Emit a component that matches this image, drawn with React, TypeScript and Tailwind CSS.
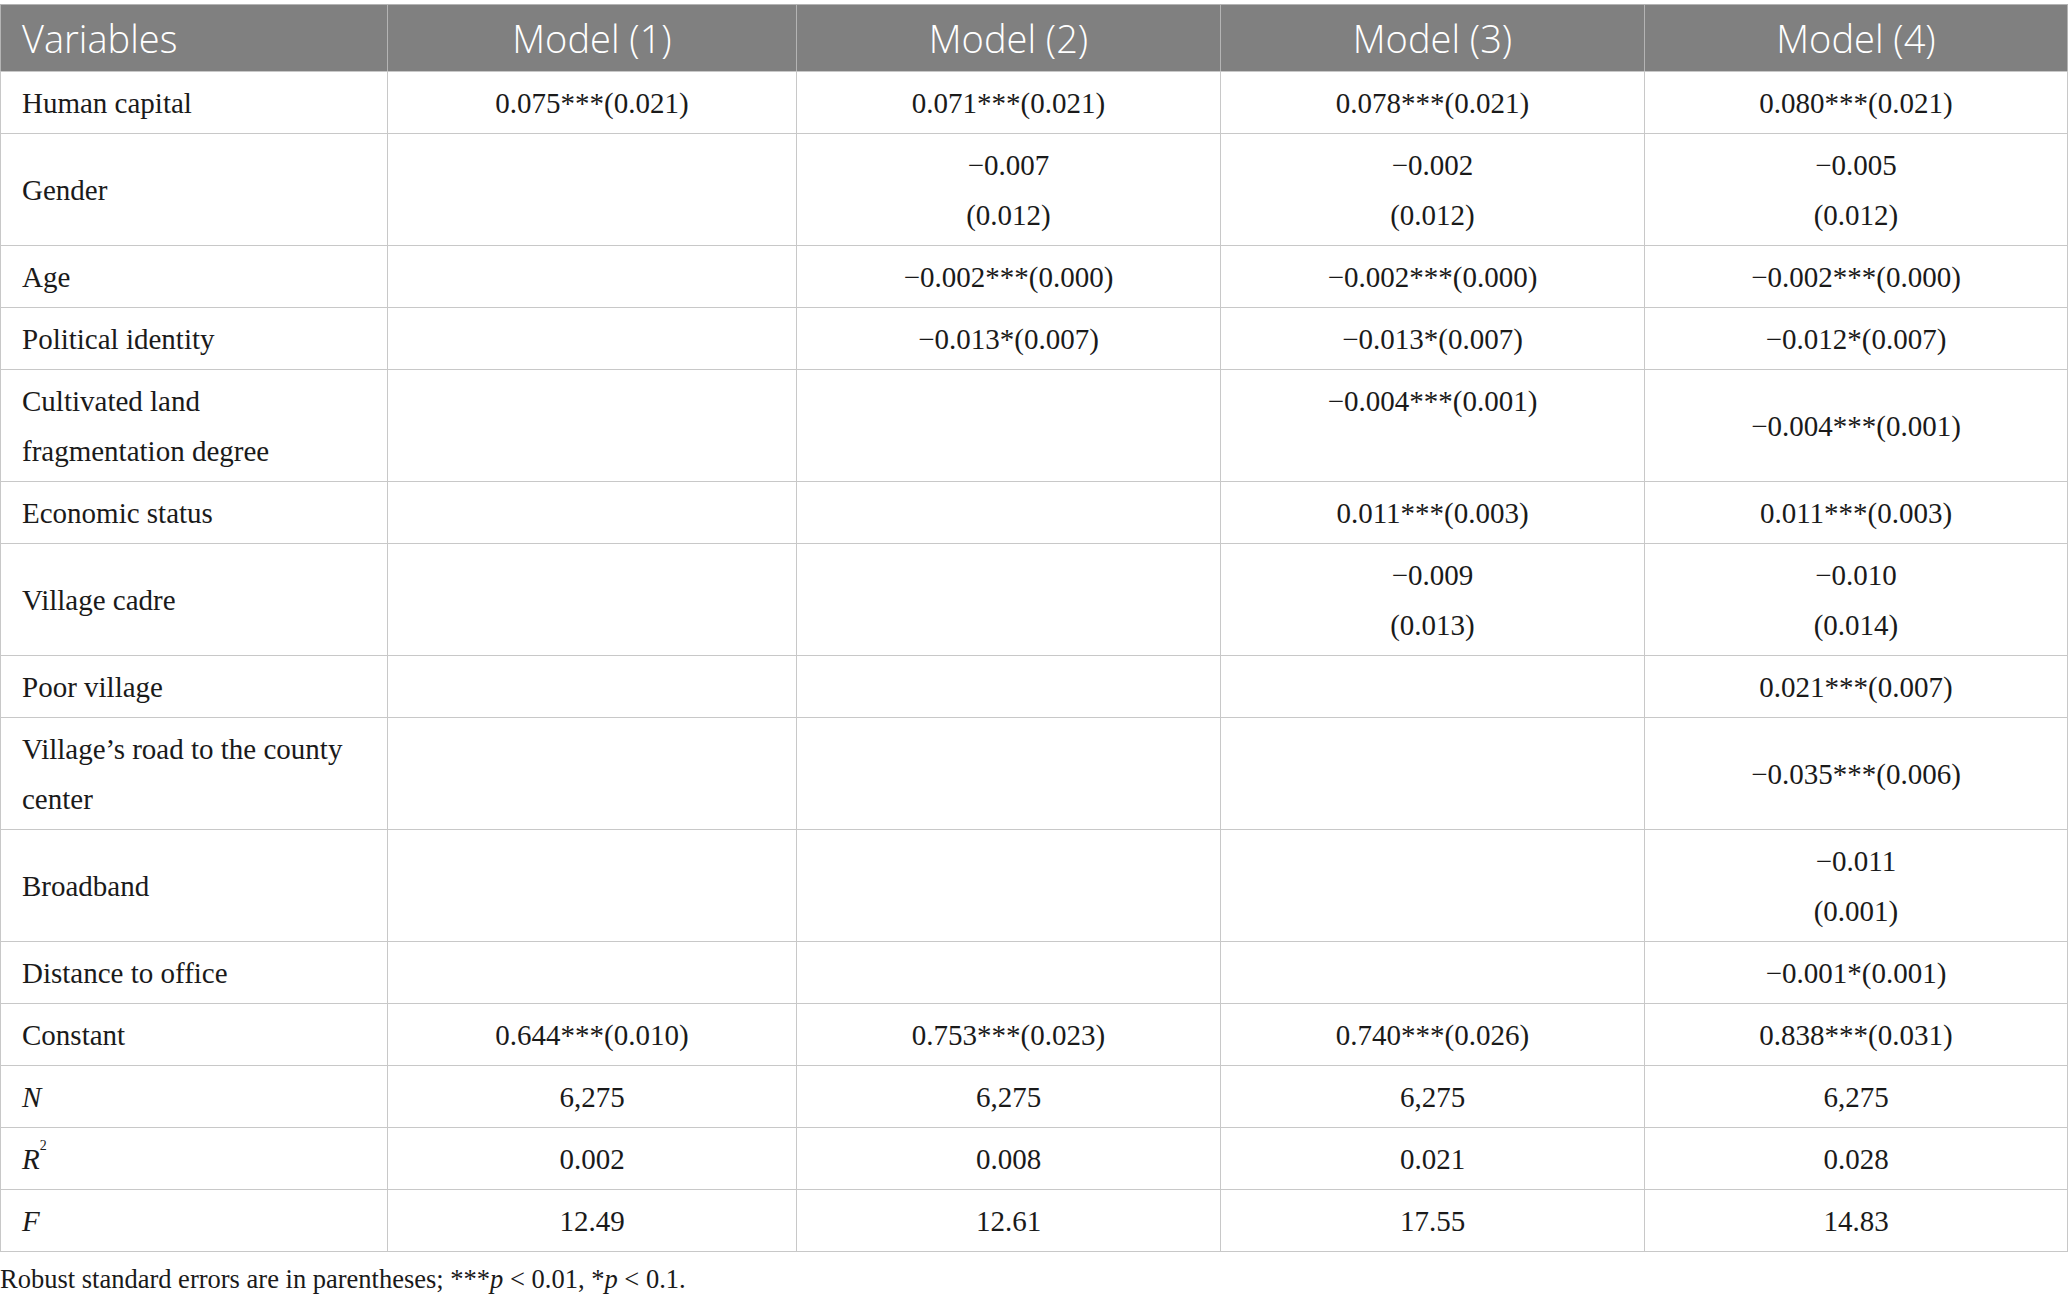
const models = ["Model (1)", "Model (2)", "Model (3)", "Model (4)"];

type Row = {
  label: React.ReactNode;
  cells: string[][];
};

const M = "\u2212";

const rows: Row[] = [
  {
    label: "Human capital",
    cells: [["0.075***(0.021)"], ["0.071***(0.021)"], ["0.078***(0.021)"], ["0.080***(0.021)"]],
  },
  {
    label: "Gender",
    cells: [[], [M + "0.007", "(0.012)"], [M + "0.002", "(0.012)"], [M + "0.005", "(0.012)"]],
  },
  {
    label: "Age",
    cells: [[], [M + "0.002***(0.000)"], [M + "0.002***(0.000)"], [M + "0.002***(0.000)"]],
  },
  {
    label: "Political identity",
    cells: [[], [M + "0.013*(0.007)"], [M + "0.013*(0.007)"], [M + "0.012*(0.007)"]],
  },
  {
    label: (
      <>
        Cultivated land
        <br />
        fragmentation degree
      </>
    ),
    cells: [[], [], [M + "0.004***(0.001)", "\u00a0"], [M + "0.004***(0.001)"]],
  },
  {
    label: "Economic status",
    cells: [[], [], ["0.011***(0.003)"], ["0.011***(0.003)"]],
  },
  {
    label: "Village cadre",
    cells: [[], [], [M + "0.009", "(0.013)"], [M + "0.010", "(0.014)"]],
  },
  {
    label: "Poor village",
    cells: [[], [], [], ["0.021***(0.007)"]],
  },
  {
    label: (
      <>
        Village’s road to the county
        <br />
        center
      </>
    ),
    cells: [[], [], [], [M + "0.035***(0.006)"]],
  },
  {
    label: "Broadband",
    cells: [[], [], [], [M + "0.011", "(0.001)"]],
  },
  {
    label: "Distance to office",
    cells: [[], [], [], [M + "0.001*(0.001)"]],
  },
  {
    label: "Constant",
    cells: [["0.644***(0.010)"], ["0.753***(0.023)"], ["0.740***(0.026)"], ["0.838***(0.031)"]],
  },
  {
    label: <i>N</i>,
    cells: [["6,275"], ["6,275"], ["6,275"], ["6,275"]],
  },
  {
    label: (
      <>
        <i>R</i>
        <sup className="text-[14px] align-[12px]">2</sup>
      </>
    ),
    cells: [["0.002"], ["0.008"], ["0.021"], ["0.028"]],
  },
  {
    label: <i>F</i>,
    cells: [["12.49"], ["12.61"], ["17.55"], ["14.83"]],
  },
];

export default function App() {
  return (
    <div className="w-[2068px] min-h-[1305px] bg-white pt-[4px]">
      <table className="table-fixed border-collapse w-[2067px] font-['Liberation_Serif',serif] text-[29px] text-[#1a1a1a]">
        <colgroup>
          <col className="w-[387px]" />
          <col className="w-[409px]" />
          <col className="w-[424px]" />
          <col className="w-[424px]" />
          <col className="w-[423px]" />
        </colgroup>
        <thead>
          <tr className="bg-[#808080] text-white font-['Open_Sans',sans-serif] text-[38px] font-light">
            <th className="h-[67px] border border-[#b4b4b4] border-b-[#c8c8c8] text-left font-light pl-[21px]">
              Variables
            </th>
            {models.map((m) => (
              <th key={m} className="h-[67px] border border-[#b4b4b4] border-b-[#c8c8c8] text-center font-light">
                {m}
              </th>
            ))}
          </tr>
        </thead>
        <tbody>
          {rows.map((r, i) => (
            <tr key={i}>
              <td className="border border-[#c8c8c8] pl-[21px] pt-[6px] pb-[5px] leading-[50px] align-middle">
                {r.label}
              </td>
              {r.cells.map((c, j) => (
                <td
                  key={j}
                  className="border border-[#c8c8c8] pt-[6px] pb-[5px] leading-[50px] text-center align-middle"
                >
                  {c.map((line, k) => (
                    <div key={k}>{line}</div>
                  ))}
                </td>
              ))}
            </tr>
          ))}
        </tbody>
      </table>
      <p className="mt-[7px] font-['Liberation_Serif',serif] text-[26.5px] leading-[40px] text-[#1a1a1a]">
        Robust standard errors are in parentheses; ***<i>p</i> &lt; 0.01, *<i>p</i> &lt; 0.1.
      </p>
    </div>
  );
}
